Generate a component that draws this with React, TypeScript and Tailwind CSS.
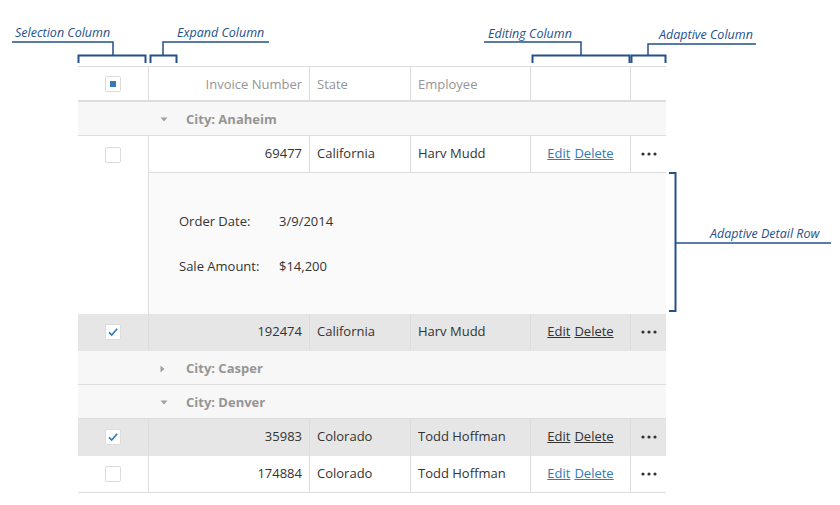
import React from "react";

const F = { fontFamily: '"Open Sans", "Noto Sans", Arial, sans-serif' };

function CheckBox({ state }: { state: "none" | "checked" | "ind" }) {
  return (
    <div className="flex h-[16px] w-[16px] items-center justify-center rounded-[2px] border border-[#dcdcdc] bg-white">
      {state === "ind" && <div className="h-[6px] w-[6px] bg-[#337ab7]" />}
      {state === "checked" && (
        <svg width="12" height="12" viewBox="0 0 12 12">
          <path d="M2 6.4 L4.7 9 L10.2 2.8" fill="none" stroke="#337ab7" strokeWidth="1.7" />
        </svg>
      )}
    </div>
  );
}

function Dots() {
  return (
    <svg width="16" height="4" viewBox="0 0 16 4">
      <circle cx="2" cy="2" r="1.6" fill="#333" />
      <circle cx="8" cy="2" r="1.6" fill="#333" />
      <circle cx="14" cy="2" r="1.6" fill="#333" />
    </svg>
  );
}

function DataRow({
  inv,
  state,
  emp,
  selected,
  noSelBottom,
}: {
  inv: string;
  state: string;
  emp: string;
  selected: boolean;
  noSelBottom?: boolean;
}) {
  const bg = selected ? "bg-[#e6e6e6]" : "bg-white";
  const bb = selected ? "border-b border-b-[#e6e6e6]" : "border-b border-b-[#dddddd]";
  const link = selected ? "text-[#333] underline" : "text-[#337ab7] underline";
  return (
    <div className={`flex h-[37px] text-[13px] text-[#333] ${bg}`}>
      <div className={`flex w-[70px] items-center justify-center ${noSelBottom ? "" : bb}`}>
        <CheckBox state={selected ? "checked" : "none"} />
      </div>
      <div className={`flex w-[161px] items-center justify-end border-l border-l-[#dddddd] pr-[7px] ${bb}`}>{inv}</div>
      <div className={`flex w-[101px] items-center border-l border-l-[#dddddd] pl-[7px] ${bb}`}>{state}</div>
      <div className={`flex w-[120px] items-center border-l border-l-[#dddddd] pl-[7px] ${bb}`}>{emp}</div>
      <div className={`flex w-[100px] items-center justify-center gap-[4px] border-l border-l-[#dddddd] ${bb}`}>
        <span className={link}>Edit</span>
        <span className={link}>Delete</span>
      </div>
      <div className={`flex w-[36px] items-center justify-center border-l border-l-[#dddddd] ${bb}`}>
        <Dots />
      </div>
    </div>
  );
}

function GroupRow({ label, open }: { label: string; open: boolean }) {
  return (
    <div className="flex h-[34px] items-center border-b border-b-[#dddddd] bg-[#f7f7f7] pt-[2px] text-[13px] font-bold text-[#959595]">
      <div className="w-[70px]" />
      <div className="flex w-[38px] items-center pl-[12px]">
        {open ? (
          <svg width="8" height="5" viewBox="0 0 8 5">
            <path d="M0.5 0.5 H7.5 L4 4.5 Z" fill="#a0a0a0" />
          </svg>
        ) : (
          <svg width="5" height="8" viewBox="0 0 5 8">
            <path d="M0.5 0.5 V7.5 L4.5 4 Z" fill="#a0a0a0" />
          </svg>
        )}
      </div>
      <span>{label}</span>
    </div>
  );
}

export default function App() {
  const blue = "#24508c";
  return (
    <div className="relative h-[505px] w-[840px] overflow-hidden bg-white" style={F}>
      <div className="pl-[78px] pt-[66px]">
        <div className="flex w-[588px] flex-col">
          <div className="flex h-[36px] border-t border-b-2 border-[#dddddd] text-[13px] text-[#959595]">
            <div className="flex w-[70px] items-center justify-center">
              <CheckBox state="ind" />
            </div>
            <div className="flex w-[161px] items-center justify-end border-l border-l-[#dddddd] pr-[7px] pt-[2px]">Invoice Number</div>
            <div className="flex w-[101px] items-center border-l border-l-[#dddddd] pl-[7px] pt-[2px]">State</div>
            <div className="flex w-[120px] items-center border-l border-l-[#dddddd] pl-[7px] pt-[2px]">Employee</div>
            <div className="w-[100px] border-l border-l-[#dddddd]" />
            <div className="w-[36px] border-l border-l-[#dddddd]" />
          </div>

          <GroupRow label="City: Anaheim" open />
          <DataRow inv="69477" state="California" emp="Harv Mudd" selected={false} noSelBottom />

          <div className="flex h-[141px] text-[13px] text-[#333]">
            <div className="w-[70px] bg-white" />
            <div className="flex w-[518px] flex-col justify-center gap-[25px] border-l border-l-[#dddddd] bg-[#fafafa] pl-[30px] pt-[2px]">
              <div className="flex h-[20px] items-center">
                <span className="w-[100px]">Order Date:</span>
                <span>3/9/2014</span>
              </div>
              <div className="flex h-[20px] items-center">
                <span className="w-[100px]">Sale Amount:</span>
                <span>$14,200</span>
              </div>
            </div>
          </div>

          <DataRow inv="192474" state="California" emp="Harv Mudd" selected />
          <GroupRow label="City: Casper" open={false} />
          <GroupRow label="City: Denver" open />
          <DataRow inv="35983" state="Colorado" emp="Todd Hoffman" selected />
          <DataRow inv="174884" state="Colorado" emp="Todd Hoffman" selected={false} />
        </div>
      </div>

      <svg className="pointer-events-none absolute left-0 top-0" width="840" height="505" viewBox="0 0 840 505">
        <g fill="none" stroke={blue} strokeWidth="1.5">
          <path d="M12 42 H113 V55" />
          <path d="M78.5 63 V55.5 H145.5 V63" strokeWidth="2" />
          <path d="M163 55 V42 H269" />
          <path d="M150.5 63 V55.5 H176.5 V63" strokeWidth="2" />
          <path d="M484 42 H581 V55" />
          <path d="M532.5 63 V55.5 H629.5 V63" strokeWidth="2" />
          <path d="M648 55 V44 H756" />
          <path d="M631.5 63 V55.5 H665.5 V63" strokeWidth="2" />
          <path d="M669 173 H675.5 V311 H669" strokeWidth="2" />
          <path d="M675 243 H831" />
        </g>
      </svg>

      <span className="absolute left-[15px] top-[25px] text-[12.5px] italic leading-[16px] text-[#24508c]">Selection Column</span>
      <span className="absolute left-[177px] top-[25px] text-[12.5px] italic leading-[16px] text-[#24508c]">Expand Column</span>
      <span className="absolute left-[488px] top-[26px] text-[12.5px] italic leading-[16px] text-[#24508c]">Editing Column</span>
      <span className="absolute left-[659px] top-[27px] text-[12.5px] italic leading-[16px] text-[#24508c]">Adaptive Column</span>
      <span className="absolute left-[710px] top-[226px] text-[12.5px] italic leading-[16px] text-[#24508c]">Adaptive Detail Row</span>
    </div>
  );
}
